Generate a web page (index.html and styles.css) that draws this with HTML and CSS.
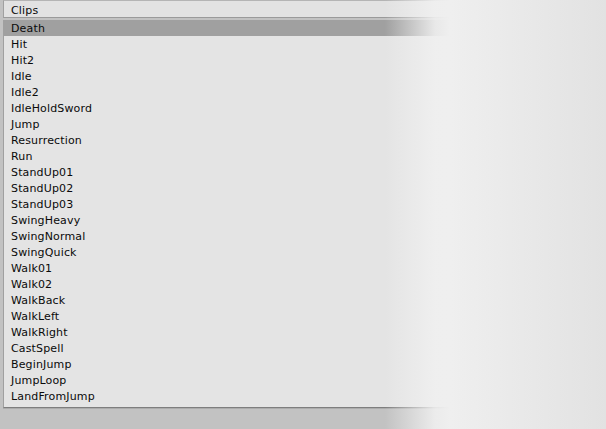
FILE: index.html
```html
<!DOCTYPE html>
<html>
<head>
<meta charset="utf-8">
<link rel="stylesheet" href="styles.css">
</head>
<body>
<div class="window">
  <div class="header">Clips</div>
  <ul class="list">
    <li class="selected">Death</li>
    <li>Hit</li>
    <li>Hit2</li>
    <li>Idle</li>
    <li>Idle2</li>
    <li>IdleHoldSword</li>
    <li>Jump</li>
    <li>Resurrection</li>
    <li>Run</li>
    <li>StandUp01</li>
    <li>StandUp02</li>
    <li>StandUp03</li>
    <li>SwingHeavy</li>
    <li>SwingNormal</li>
    <li>SwingQuick</li>
    <li>Walk01</li>
    <li>Walk02</li>
    <li>WalkBack</li>
    <li>WalkLeft</li>
    <li>WalkRight</li>
    <li>CastSpell</li>
    <li>BeginJump</li>
    <li>JumpLoop</li>
    <li>LandFromJump</li>
  </ul>
</div>
<div class="fade"></div>
</body>
</html>
```
FILE: styles.css
```css
html, body {
  margin: 0;
  padding: 0;
  width: 606px;
  height: 429px;
  overflow: hidden;
  background: #c2c2c2;
  font-family: "DejaVu Sans", Verdana, sans-serif;
  font-size: 11px;
  letter-spacing: 0.15px;
  color: #0a0a0a;
}
.window {
  padding-left: 3px;
}
.header {
  box-sizing: border-box;
  height: 18px;
  padding: 2px 0 0 7px;
  line-height: 16px;
  background: #e2e2e2;
  border-top: 1px solid #b4b4b4;
  border-bottom: 1px solid #9a9a9a;
  border-left: 1px solid #a0a0a0;
}
.list {
  list-style: none;
  margin: 2px 0 0 0;
  padding: 0 0 3px 0;
  background: #e4e4e4;
  border-left: 1px solid #a0a0a0;
  border-bottom: 1px solid #7e7e7e;
  box-shadow: 0 1px 0 #acacac;
}
.list li {
  box-sizing: border-box;
  height: 16px;
  padding: 1px 0 0 7px;
  line-height: 16px;
  overflow: visible;
}
.list li.selected {
  background: #a0a0a0;
}
.fade {
  position: absolute;
  top: 0;
  left: 385px;
  width: 221px;
  height: 429px;
  background: linear-gradient(to right, rgba(240,240,240,0) 0px, rgba(240,240,240,0.9) 50px, #efefef 65px, #e2e2e2 221px);
}
```
